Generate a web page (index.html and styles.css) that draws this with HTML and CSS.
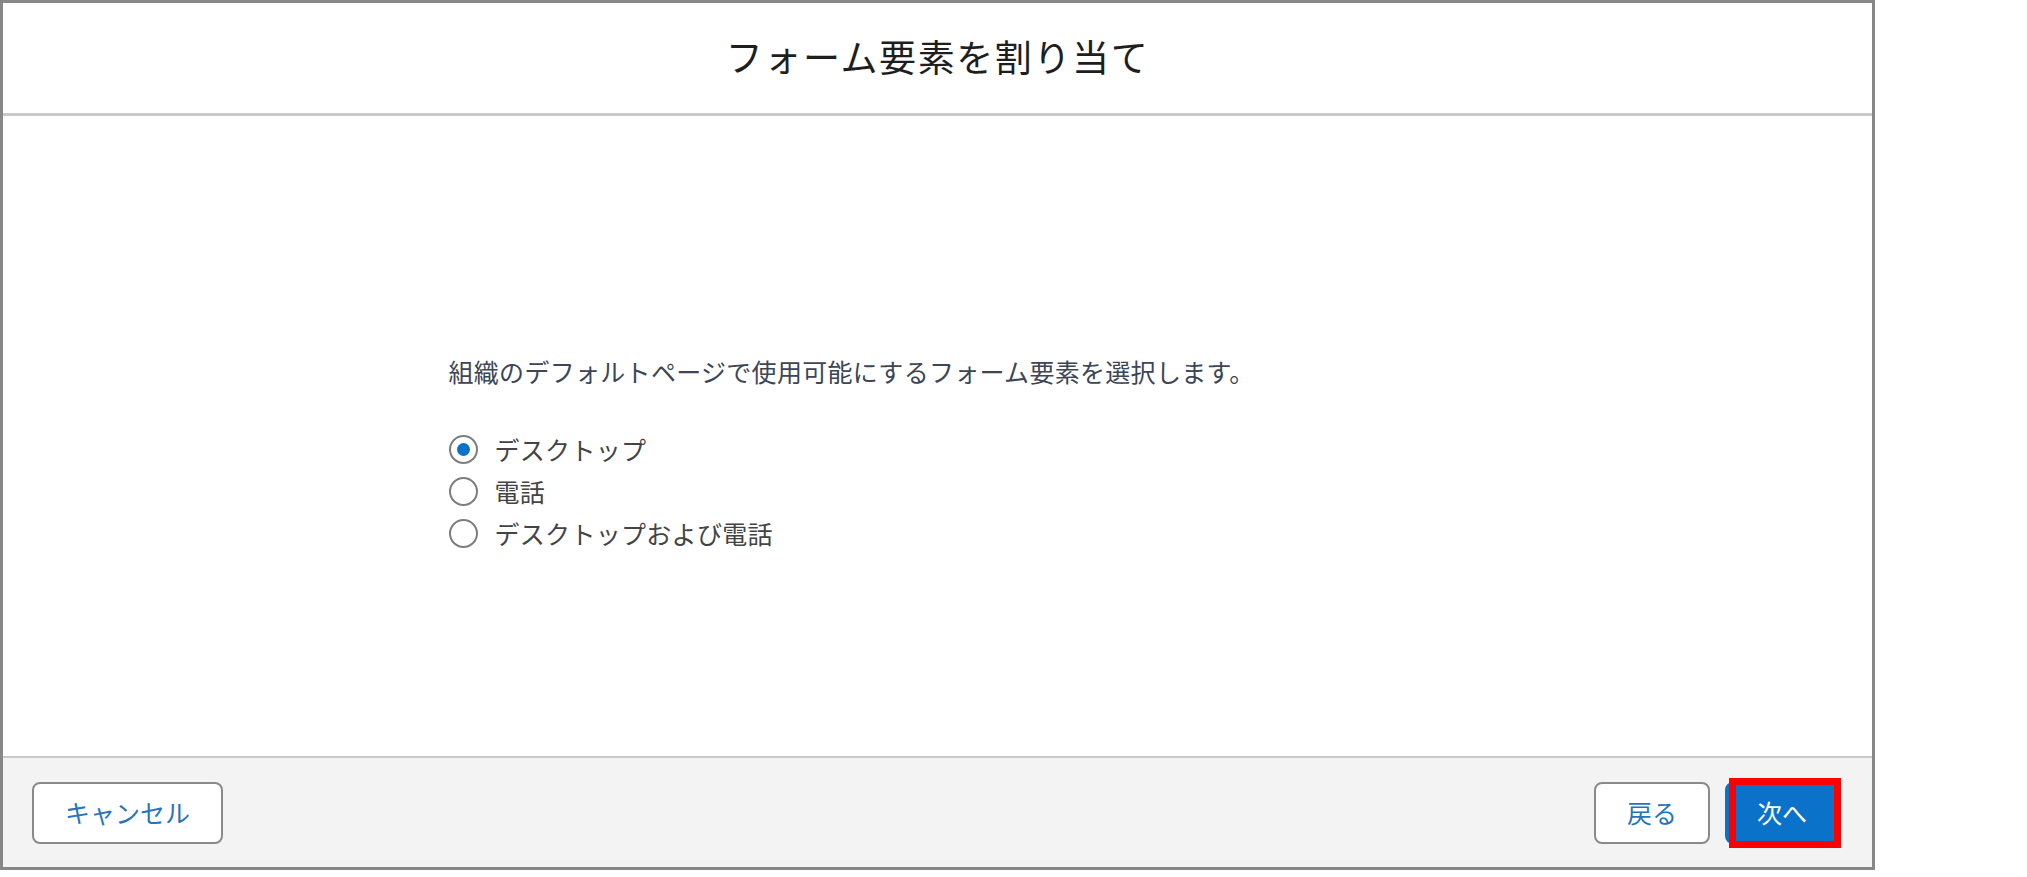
FILE: index.html
```html
<!DOCTYPE html>
<html lang="ja">
<head>
<meta charset="utf-8">
<title>フォーム要素を割り当て</title>
<link rel="stylesheet" href="styles.css">
</head>
<body>
<div class="frame">
  <header class="modal-header">
    <h1 class="modal-title">フォーム要素を割り当て</h1>
  </header>
  <main class="modal-body">
    <div class="content">
      <p class="description">組織のデフォルトページで使用可能にするフォーム要素を選択します。</p>
      <div class="radio-group">
        <label class="radio-row"><span class="radio checked"></span><span class="radio-label">デスクトップ</span></label>
        <label class="radio-row"><span class="radio"></span><span class="radio-label">電話</span></label>
        <label class="radio-row"><span class="radio"></span><span class="radio-label">デスクトップおよび電話</span></label>
      </div>
    </div>
  </main>
  <footer class="modal-footer">
    <button class="btn btn-neutral">キャンセル</button>
    <div class="footer-right">
      <button class="btn btn-neutral">戻る</button>
      <span class="highlight-wrap"><button class="btn btn-brand">次へ</button></span>
    </div>
  </footer>
</div>
</body>
</html>
```
FILE: styles.css
```css
* { box-sizing: border-box; }
html, body {
  margin: 0;
  padding: 0;
  background: #ffffff;
}
body {
  font-family: "Noto Sans CJK JP", "Noto Sans", sans-serif;
  width: 2027px;
  height: 877px;
  overflow: hidden;
}
.frame {
  width: 1875px;
  height: 870px;
  border: 3px solid #878787;
  display: flex;
  flex-direction: column;
  background: #ffffff;
}
.modal-header {
  height: 113px;
  flex: none;
  border-bottom: 3px solid #c9c9c9;
  display: flex;
  align-items: center;
  justify-content: center;
}
.modal-title {
  margin: 0;
  font-weight: 400;
  font-size: 37px;
  letter-spacing: 1.6px;
  color: #1e1e1e;
  line-height: 1.2;
  padding-bottom: 4px;
}
.modal-body {
  flex: 1;
  padding-top: 236px;
}
.content {
  width: 978px;
  margin: 0 auto;
}
.description {
  margin: 0;
  font-size: 25px;
  letter-spacing: 0.3px;
  line-height: 38px;
  color: #3c4656;
}
.radio-group {
  margin-top: 38px;
  display: flex;
  flex-direction: column;
}
.radio-row {
  height: 42px;
  display: flex;
  align-items: center;
  gap: 17px;
}
.radio {
  width: 29px;
  height: 29px;
  border: 2px solid #7d7d7d;
  border-radius: 50%;
  background: #fff;
  display: flex;
  align-items: center;
  justify-content: center;
  flex: none;
}
.radio.checked::after {
  content: "";
  width: 13px;
  height: 13px;
  border-radius: 50%;
  background: #0b72c9;
}
.radio-label {
  font-size: 25px;
  letter-spacing: 0.3px;
  color: #444444;
  line-height: 1;
}
.modal-footer {
  height: 111px;
  flex: none;
  border-top: 2px solid #c9c9c9;
  background: #f3f3f3;
  display: flex;
  align-items: center;
  justify-content: space-between;
  padding: 0 33px 0 29px;
}
.footer-right {
  display: flex;
  align-items: center;
  gap: 15px;
}
.btn {
  height: 62px;
  padding: 0 31px;
  border: 2px solid #8a8a8a;
  border-radius: 8px;
  background: #ffffff;
  font-family: "Noto Sans CJK JP", "Noto Sans", sans-serif;
  font-size: 25px;
  color: #2574bd;
  line-height: 1;
}
.btn-brand {
  background: #0b72c9;
  border-color: #0b72c9;
  color: #ffffff;
  padding: 0 30px;
}
.highlight-wrap {
  position: relative;
  display: inline-flex;
}
.highlight-wrap::after {
  content: "";
  position: absolute;
  left: 4px;
  right: -2px;
  top: -4px;
  bottom: -4px;
  border: 7px solid #ff0000;
}
```
